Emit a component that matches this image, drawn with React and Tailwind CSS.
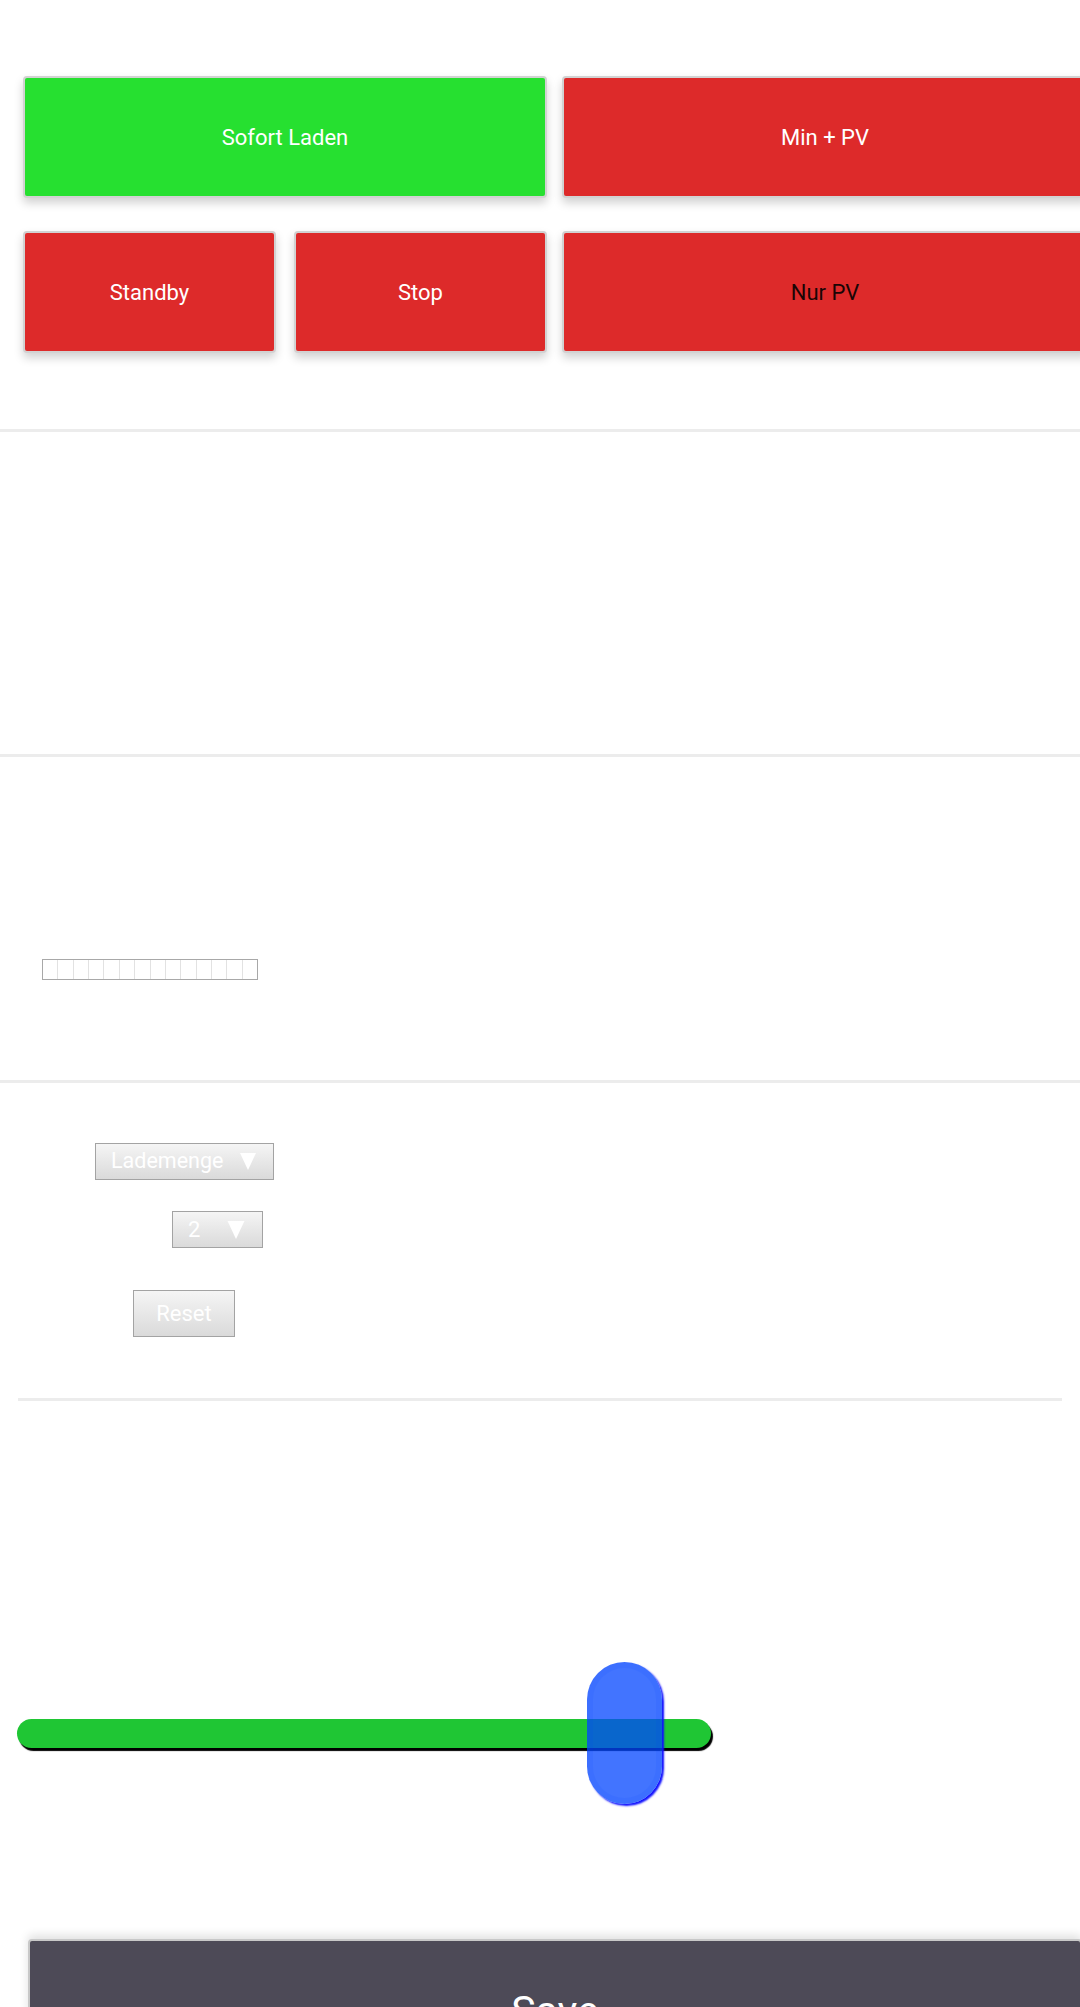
import React from "react";

const font = { fontFamily: "Roboto, 'Noto Sans', sans-serif" };

const Arrow = ({ className }) => (
  <svg viewBox="0 0 16 17" className={className}>
    <polygon points="0,0 16,0 8,17" fill="#ffffff" />
  </svg>
);

const ModeButton = ({ label, color, dark, width }) => (
  <button
    className={`${width} h-[122px] shrink-0 flex items-center justify-center rounded-[4px] border-2 border-[#d2d2d2] shadow-[0_5px_10px_rgba(0,0,0,0.18)] text-[22px] ${color} ${
      dark ? "text-[#1a0505]" : "text-white"
    }`}
  >
    {label}
  </button>
);

const Separator = ({ inset }) => (
  <div className={`h-[3px] bg-[#ececec] ${inset ? "mx-[18px]" : ""}`} />
);

export default function App() {
  const cells = Array.from({ length: 14 });

  return (
    <div className="w-[1080px] h-[2007px] overflow-hidden bg-white" style={font}>
      {/* mode buttons */}
      <div className="pt-[76px] pl-[23px] pb-[76px]">
        <div className="flex gap-[15px]">
          <ModeButton label="Sofort Laden" color="bg-[#26e030]" width="w-[524px]" />
          <ModeButton label="Min + PV" color="bg-[#dd2a2a]" width="w-[526px]" />
        </div>
        <div className="flex gap-[15px] mt-[33px]">
          <div className="w-[524px] flex gap-[18px] shrink-0">
            <ModeButton label="Standby" color="bg-[#dd2a2a]" width="w-[253px]" />
            <ModeButton label="Stop" color="bg-[#dd2a2a]" width="w-[253px]" />
          </div>
          <ModeButton label="Nur PV" color="bg-[#dd2a2a]" width="w-[526px]" dark />
        </div>
      </div>

      <Separator />
      <div className="h-[322px]" />
      <Separator />

      {/* empty cells */}
      <div className="pt-[202px] pb-[100px] pl-[42px]">
        <div className="w-[216px] h-[21px] flex border border-[#a8a8a8]">
          {cells.map((_, i) => (
            <div
              key={i}
              className={`flex-1 ${i < cells.length - 1 ? "border-r border-[#e2e2e2]" : ""}`}
            />
          ))}
        </div>
      </div>

      <Separator />

      {/* selects */}
      <div className="pt-[60px] pb-[61px] flex flex-col items-start">
        <div className="ml-[95px] w-[179px] h-[37px] flex items-center justify-between pl-[15px] pr-[17px] border border-[#a3a3a3] bg-linear-to-b from-[#f5f5f5] to-[#dadada] text-white text-[21.5px]">
          <span>Lademenge</span>
          <Arrow className="w-[16px] h-[17px]" />
        </div>
        <div className="ml-[172px] mt-[31px] w-[91px] h-[37px] flex items-center justify-between pl-[15px] pr-[17px] border border-[#a3a3a3] bg-linear-to-b from-[#f5f5f5] to-[#dadada] text-white text-[22px]">
          <span>2</span>
          <Arrow className="w-[18px] h-[18px]" />
        </div>
        <button className="ml-[133px] mt-[42px] w-[102px] h-[47px] flex items-center justify-center border border-[#a3a3a3] bg-linear-to-b from-[#f5f5f5] to-[#dadada] text-white text-[22px]">
          Reset
        </button>
      </div>

      <Separator inset />

      {/* slider */}
      <div className="relative ml-[17px] mt-[261px] w-[694px] h-[143px] flex items-center">
        <div className="w-full h-[29px] rounded-full bg-[#1fc634] shadow-[2px_3px_1px_#000]" />
        <div className="absolute left-[570px] top-0 w-[75px] h-[142px] rounded-full bg-[rgba(3,70,255,0.75)] border-[6px] border-[rgba(3,70,255,0.08)] shadow-[2px_2px_2px_#1010ff]" />
      </div>

      {/* save */}
      <button className="ml-[28px] mt-[134px] w-[1054px] h-[146px] flex items-center justify-center rounded-[4px] border-2 border-[#c8c8c8] bg-[#4d4a57] shadow-[0_-4px_10px_rgba(0,0,0,0.12)] text-white text-[41px]">
        Save
      </button>
    </div>
  );
}
